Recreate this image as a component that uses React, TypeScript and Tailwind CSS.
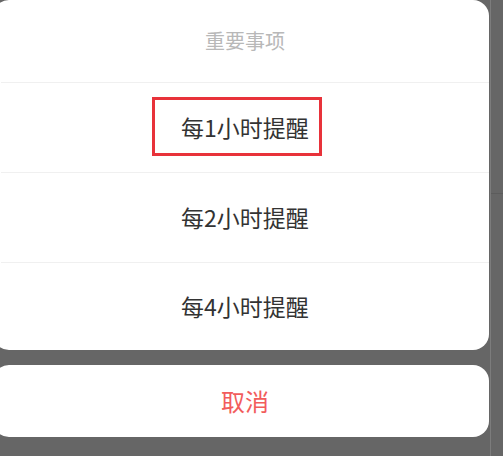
import React from 'react';

const options = ['每1小时提醒', '每2小时提醒', '每4小时提醒'];

export default function App() {
  return (
    <div
      className="relative w-[503px] h-[456px] overflow-hidden bg-[#666666] select-none"
      style={{ fontFamily: '"Noto Sans CJK SC", "Noto Sans", sans-serif' }}
    >
      {/* page behind the sheet */}
      <div className="absolute top-0 left-[490px] w-px h-full bg-[#7c7c7c]" />
      <div className="absolute top-[193px] left-[491px] w-[12px] h-px bg-[#5c5c5c]" />

      <div className="relative flex flex-col gap-[15px] ml-[-7px] w-[496px]">
        {/* Options sheet */}
        <div className="bg-white rounded-[16px] overflow-hidden pl-[8px]">
          <div className="h-[82px] flex items-center justify-center text-[20px] text-[#b8b8b8]">
            重要事项
          </div>
          {options.map((label, i) => (
            <div
              key={label}
              className={`relative flex items-center justify-center border-t border-[#f0f0f0] text-[23px] text-[#333333] ${
                i === options.length - 1 ? 'h-[88px]' : 'h-[90px]'
              }`}
            >
              {label}
              {i === 0 && (
                <div className="absolute left-[151px] top-[14px] w-[170px] h-[59px] border-[3px] border-[#e8323a]" />
              )}
            </div>
          ))}
        </div>

        {/* Cancel */}
        <div className="h-[72px] bg-white rounded-[16px] pl-[8px] flex items-center justify-center text-[24px] text-[#f25c5c]">
          取消
        </div>
      </div>
    </div>
  );
}
